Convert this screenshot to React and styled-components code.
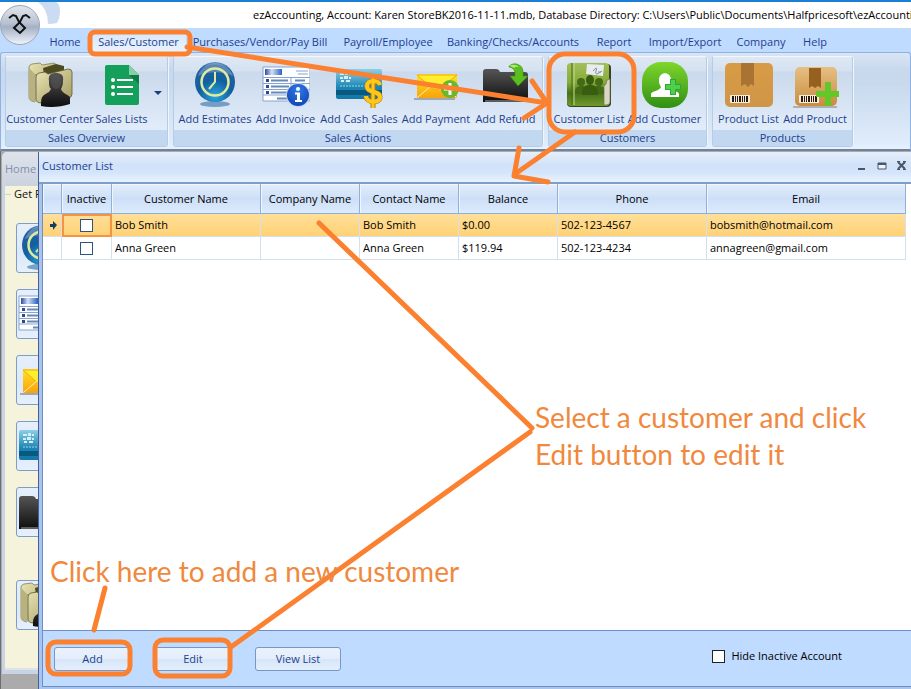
import React from 'react';
import styled, { createGlobalStyle } from 'styled-components';

const ink = '#1d3f8f';
const orange = '#fb8130';

const GlobalStyle = createGlobalStyle`
  * { box-sizing: border-box; }
  html, body { margin: 0; padding: 0; }
  body, button, input, table {
    font-family: "Open Sans", "Noto Sans", sans-serif;
    font-size: 11px;
  }
  svg { display: block; flex: none; }
`;

/* ---------- shell ---------- */

const Shell = styled.div`
  position: relative;
  display: flex;
  flex-direction: column;
  height: 100vh;
  overflow: hidden;
  background: #bfdbff;
`;

const TitleBar = styled.header`
  display: flex;
  align-items: center;
  height: 28px;
  flex: none;
  padding-left: 253px;
  border-top: 2px solid #1a7fd4;
  background: #fff;
  overflow: hidden;
`;

const Title = styled.h1`
  margin: 0;
  font-size: 11px;
  font-weight: 400;
  line-height: 16px;
  color: #000;
  white-space: nowrap;
`;

const AppButton = styled.button`
  position: absolute;
  left: 0;
  top: 0;
  width: 60px;
  height: 46px;
  padding: 0;
  border: 0;
  background: none;
`;

const TabBar = styled.nav`
  display: flex;
  flex: none;
  height: 24px;
  padding-left: 42px;
  background: #bfdbff;
`;

const Tab = styled.button`
  display: flex;
  align-items: center;
  justify-content: center;
  flex: none;
  width: ${(p) => p.$width}px;
  padding: 3px 3px 0;
  border: 0;
  line-height: 18px;
  white-space: nowrap;
  color: ${ink};
  background: ${(p) => (p.$active ? 'linear-gradient(#d5e6fb, #eaf3fd) content-box' : 'none')};
`;

/* ---------- ribbon ---------- */

const Ribbon = styled.div`
  display: flex;
  flex: none;
  gap: 5px;
  height: 99px;
  padding: 3px 5px 4px 4px;
  border: 1px solid #8db2e3;
  border-bottom: 2px solid #71839c;
  border-radius: 3px 3px 0 0;
  background: linear-gradient(#d9e5f4 0, #c9d9ed 16px, #c8d9ee 30px, #dfecfb 90px, #e7f2ff 100%);
`;

const Group = styled.section`
  display: flex;
  flex-direction: column;
  flex: none;
  height: 91px;
  border: 1px solid #b5cbe6;
  border-top-color: #f4f8fd;
  border-radius: 3px;
  box-shadow: 1px 0 0 #eef5fd;
  background: linear-gradient(#dfe8f4 0, #d5e1f1 14px, #cad9ec 15px, #e2edfa 74px);
`;

const GroupItems = styled.div`
  display: flex;
  flex: 1;
  padding: 0 3px;
`;

const GroupName = styled.h2`
  margin: 0;
  height: 16px;
  font-size: 11px;
  font-weight: 400;
  line-height: 15px;
  text-align: center;
  color: ${ink};
  background: #c1d8f0;
`;

const RibbonButton = styled.button`
  display: flex;
  flex-direction: column;
  align-items: center;
  flex: none;
  width: ${(p) => p.$width}px;
  padding: 4px 0 0;
  border: 0;
  background: none;
  color: ${ink};
`;

const RibbonLabel = styled.span`
  line-height: 20px;
  white-space: nowrap;
`;

const DropButton = styled.button`
  width: 12px;
  padding: 0 2px;
  border: 0;
  background: none;
`;

/* ---------- workspace ---------- */

const Workspace = styled.main`
  display: flex;
  flex: 1;
  min-height: 0;
  padding: 1px 0 0 1px;
  border-left: 1px solid #6a6d73;
  background: #ababab;
`;

const HomeWindow = styled.section`
  display: flex;
  flex-direction: column;
  width: 36px;
  flex: none;
  margin-bottom: 15px;
  overflow: hidden;
  border-radius: 5px 0 0 0;
  background: #c7d4e6;
`;

const HomeTitle = styled.h2`
  margin: 0;
  height: 34px;
  flex: none;
  padding: 8px 0 0 3px;
  font-size: 11px;
  font-weight: 400;
  line-height: 18px;
  color: #8090aa;
  background: linear-gradient(#dfe4eb, #cbd3df);
`;

const HomeBody = styled.div`
  flex: 1;
  min-height: 0;
  margin: 0 0 4px 3px;
  padding-top: 2px;
  overflow: hidden;
  background: #f5f3dc;
  border-bottom: 2px solid #dfe3e2;
`;

const HomeLegend = styled.p`
  display: flex;
  align-items: center;
  gap: 3px;
  margin: 0;
  line-height: 12px;
  white-space: nowrap;
  color: #111;
  &::before {
    content: '';
    flex: none;
    width: 6px;
    height: 1px;
    background: #d4d4c8;
  }
`;

const Shortcuts = styled.div`
  display: flex;
  flex-direction: column;
  gap: 16px;
  padding: 23px 0 0 11px;
`;

const Shortcut = styled.button`
  display: grid;
  place-items: center;
  width: 66px;
  height: 50px;
  flex: none;
  padding: 0 14px 0 0;
  border: 1px solid #7d9cc8;
  border-radius: 3px;
  background: linear-gradient(#e6effb, #dce9fa 60%, #e6f0fc);
  margin-top: ${(p) => (p.$last ? 27 : 0)}px;
`;

const ListWindow = styled.section`
  display: flex;
  flex-direction: column;
  flex: 1;
  min-width: 0;
  padding: 0 0 2px 3px;
  border-left: 1px solid #42619c;
  background: #a9c5ee;
`;

const WindowBar = styled.div`
  display: flex;
  align-items: center;
  justify-content: space-between;
  height: 32px;
  flex: none;
  margin-left: -3px;
  padding: 0 3px 2px;
  border-bottom: 2px solid #7f9fcb;
  background: linear-gradient(#e6effb, #d0e1f8 14px, #d3e4fb 20px, #e8f3ff);
`;

const WindowTitle = styled.h2`
  margin: 0;
  font-size: 11px;
  font-weight: 400;
  line-height: 18px;
  color: ${ink};
`;

const WindowTools = styled.div`
  display: flex;
  gap: 8px;
`;

const ToolButton = styled.button`
  padding: 0;
  border: 0;
  background: none;
`;

const GridArea = styled.div`
  flex: 1;
  min-height: 0;
  padding-right: 5px;
  border-left: 1px solid #6f8fbf;
  background: #fff;
`;

const DataTable = styled.table`
  width: 100%;
  table-layout: fixed;
  border-collapse: separate;
  border-spacing: 0;
  color: #000;
`;

const HeadCell = styled.th`
  height: 30px;
  padding: 0;
  font-weight: 400;
  white-space: nowrap;
  border-right: 1px solid #8fb0da;
  border-bottom: 1px solid #8fb0da;
  box-shadow: inset 1px 1px 0 #f0f6fe;
  background: linear-gradient(#e4eefb, #cddff7 50%, #dcecfe);
`;

const Row = styled.tr`
  background: ${(p) => (p.$selected ? 'linear-gradient(#ffdf98, #ffd174)' : '#fff')};
`;

const Cell = styled.td`
  height: 23px;
  padding: 0 3px;
  line-height: 16px;
  white-space: nowrap;
  border-right: 1px solid #d3e0f2;
  border-bottom: 1px solid #d3e0f2;
  ${(p) => p.$focus && `outline: 2px solid #f59342; outline-offset: -2px;`}
`;

const Tick = styled.input`
  appearance: none;
  display: block;
  flex: none;
  width: 13px;
  height: 13px;
  margin: ${(p) => (p.$centered ? '0 auto' : '0')};
  border: 1px solid ${(p) => (p.$centered ? '#2d5580' : '#222')};
  background: #fff;
`;

const Footer = styled.footer`
  display: flex;
  align-items: flex-start;
  gap: 24px;
  height: 57px;
  flex: none;
  padding: 16px 69px 0 11px;
  border: 1px solid #6f8fbf;
  border-right: 0;
  background: #bfdbff;
`;

const PushButton = styled.button`
  width: ${(p) => p.$width}px;
  height: 24px;
  padding: 0;
  border: 1px solid #7597c9;
  border-radius: 3px;
  line-height: 18px;
  color: ${ink};
  background: linear-gradient(#e9f1fc 0, #e4eefb 50%, #d6e5f8 52%, #e4effc);
`;

const HideLabel = styled.label`
  display: flex;
  align-items: center;
  gap: 6px;
  margin: 0 0 0 auto;
  line-height: 18px;
  color: #000;
`;

/* ---------- callouts ---------- */

const Callouts = styled.div`
  position: absolute;
  inset: 0;
  overflow: hidden;
  pointer-events: none;
`;

const Note = styled.p`
  position: absolute;
  left: ${(p) => p.$x}px;
  top: ${(p) => p.$y}px;
  margin: 0;
  font-family: Lato, "Open Sans", sans-serif;
  font-size: 28px;
  font-variant-ligatures: none;
  line-height: 37px;
  white-space: pre-line;
  color: #f0883e;
`;

/* ---------- icons ---------- */

const Defs = () => (
  <svg width="0" height="0" aria-hidden="true">
    <defs>
      <linearGradient id="khaki" x2="1" y2="1"><stop stopColor="#e8e4b4" /><stop offset="1" stopColor="#a39b60" /></linearGradient>
      <linearGradient id="black" x2="0" y2="1"><stop stopColor="#555" /><stop offset="1" stopColor="#0e0e0e" /></linearGradient>
      <radialGradient id="globe" cx=".5" cy=".85" r=".9"><stop stopColor="#2ba6dd" /><stop offset=".45" stopColor="#12609f" /><stop offset=".85" stopColor="#255f9f" /><stop offset="1" stopColor="#7bb4dd" /></radialGradient>
      <linearGradient id="card" x2="0" y2="1"><stop stopColor="#8cd0e6" /><stop offset=".6" stopColor="#1c86b4" /><stop offset="1" stopColor="#1376a6" /></linearGradient>
      <linearGradient id="gold" x2="0" y2="1"><stop stopColor="#ffe524" /><stop offset="1" stopColor="#f9a10c" /></linearGradient>
      <linearGradient id="leaf" x2="0" y2="1"><stop stopColor="#7fd62c" /><stop offset="1" stopColor="#2f8f14" /></linearGradient>
      <linearGradient id="book" x2="0" y2="1"><stop stopColor="#a3bf58" /><stop offset=".45" stopColor="#86ab3a" /><stop offset=".7" stopColor="#47701a" /><stop offset="1" stopColor="#6f9a2a" /></linearGradient>
      <linearGradient id="box" x2="0" y2="1"><stop stopColor="#d99c45" /><stop offset="1" stopColor="#cf9547" /></linearGradient>
      <linearGradient id="boxLight" x2="0" y2="1"><stop stopColor="#e6bf84" /><stop offset="1" stopColor="#c98c3e" /></linearGradient>
      <radialGradient id="info" cx=".5" cy=".3" r=".8"><stop stopColor="#2f7be8" /><stop offset="1" stopColor="#0b3fae" /></radialGradient>
      <linearGradient id="flag" x2="1"><stop stopColor="#2c4da0" /><stop offset=".4" stopColor="#d6e1f6" /><stop offset="1" stopColor="#2a62c0" /></linearGradient>
      <linearGradient id="orb" x2="0" y2="1"><stop stopColor="#e3e7ee" /><stop offset=".45" stopColor="#b9c2d2" /><stop offset=".55" stopColor="#a4b0c4" /><stop offset="1" stopColor="#f1f5fb" /></linearGradient>
    </defs>
  </svg>
);

const Icon = ({ children }) => (
  <svg width="48" height="48" viewBox="0 0 48 48" aria-hidden="true">{children}</svg>
);

const FoldersIcon = () => (
  <Icon>
    <path d="M3 6q0-2 3-3l8-1 2 2 12-2 3 2v4L9 14v27q-6-1-6-5z" fill="url(#khaki)" stroke="#77713f" strokeWidth=".7" />
    <path d="M17 7l13-4 8 2v6l-20 3z" fill="#4d4923" />
    <path d="M10 16q0-3 3-4l6-1 3 2 20-5q4 0 4 3v22q0 3-3 4l-27 5q-6 0-6-4z" fill="url(#khaki)" stroke="#5d582f" strokeWidth=".8" />
    <path d="M3 7l6 6v28q-6-1-6-5z" fill="#b9b27a" />
    <path d="M23 20c-1-6 2-8 7-8s8 2 7 8c0 4-1 6-2 8 1 4 6 5 9 8v7c-9 3-20 4-29 2 0-8 0-10 8-14l2-3c-2-2-2-4-2-8z" fill="url(#black)" />
    <path d="M25 20c0-4 2-6 5-6s5 3 5 7-2 7-5 7-5-4-5-8z" fill="#555" opacity=".5" />
  </Icon>
);

const SheetIcon = () => (
  <Icon>
    <path d="M9 4h22l10 10v28a2 2 0 0 1-2 2H9a2 2 0 0 1-2-2V6a2 2 0 0 1 2-2z" fill="#14a05a" />
    <path d="M31 4l10 10H31z" fill="#86cfa8" />
    <path d="M31 14h10v9z" fill="#0d7a44" />
    <g fill="#fff">
      <circle cx="15" cy="19" r="2" /><circle cx="15" cy="26" r="2" /><circle cx="15" cy="33" r="2" />
      <path d="M19 18h16v2H19zM19 25h16v2H19zM19 32h16v2H19z" />
    </g>
  </Icon>
);

const ClockIcon = () => (
  <Icon>
    <ellipse cx="24" cy="43" rx="15" ry="3" fill="#4d7fae" opacity=".7" />
    <circle cx="24" cy="21" r="20" fill="url(#globe)" />
    <path d="M7 15C10 6 17 2 24 2S39 6 42 15c-10-5-25-5-35 0z" fill="#fff" opacity=".25" />
    <circle cx="24" cy="21" r="13.500" fill="none" stroke="#dfeb9e" strokeWidth="2.500" />
    <path d="M24 11v10l-6 7" fill="none" stroke="#dfeb9e" strokeWidth="2" />
  </Icon>
);

const FormArt = () => (
  <>
    <path d="M1 6h47v34H1z" fill="#fdfeff" stroke="#8ba3cc" />
    <path d="M3 8h17v6H3z" fill="url(#flag)" />
    <path d="M34 10h12M36 13h10M1 16.500h47M1 22.500h47M1 28.500h47M29 16v17M1 34h47" stroke="#8ba3cc" fill="none" />
    <path d="M4 18h3v3H4zM4 24h3v3H4zM4 30h3v3H4z" fill="#30488e" />
    <path d="M9 19.500h17M9 25.500h18M9 31.500h17M33 19.500h10M15 37.500h12" stroke="#6689b8" strokeWidth="2" />
  </>
);

const InvoiceIcon = () => (
  <Icon>
    <FormArt />
    <circle cx="36" cy="34" r="12" fill="#c5d3e8" />
    <circle cx="36" cy="34" r="11" fill="url(#info)" />
    <circle cx="36" cy="28" r="2" fill="#fff" />
    <path d="M33 31.500h5v7.500h2v2h-7v-2h2v-5.500h-2z" fill="#fff" />
  </Icon>
);

const FormIcon = () => <Icon><FormArt /></Icon>;

const CardArt = () => (
  <>
    <rect x="1" y="8" width="46" height="30" rx="2" fill="url(#card)" />
    <path d="M1 29h46v5H1z" fill="#08587f" />
    <path d="M5 12h4v2H5zM10 11h3v3h-3zM14 12h2v2h-2zM5 16h3v2H5zM9 15h4v3H9zM14 16h2v2h-2zM6 19h3v2H6zM11 19h4v2h-4z" fill="#d7eef6" />
    <path d="M5 25h26" stroke="#a5d3e5" strokeDasharray="2 1" />
  </>
);

const CardIcon = () => <Icon><CardArt /></Icon>;

const CashIcon = () => (
  <Icon>
    <CardArt />
    <path d="M45 24c-1-5-13-6-13 1 0 8 13 4 13 11 0 7-14 6-14-1" fill="none" stroke="#b7741a" strokeWidth="5" />
    <path d="M38 16v31" stroke="#b7741a" strokeWidth="5" />
    <path d="M38 16v31" stroke="#ffc814" strokeWidth="3" />
    <path d="M45 24c-1-5-13-6-13 1 0 8 13 4 13 11 0 7-14 6-14-1" fill="none" stroke="#ffc814" strokeWidth="4" />
  </Icon>
);

const MailArt = () => (
  <>
    <path d="M2 38h41" stroke="#9fa9b5" strokeWidth="2" />
    <rect x="5" y="13" width="40" height="24" rx="2" fill="url(#gold)" />
    <path d="M5 14l16 14h6L45 14z" fill="#ffee2d" stroke="#f0aa11" />
    <path d="M6 36l13-11M44 36L30 25" stroke="#fff3a6" fill="none" />
  </>
);

const MailIcon = () => <Icon><MailArt /></Icon>;

const PaymentIcon = () => (
  <Icon>
    <MailArt />
    <circle cx="38" cy="28" r="9" fill="#67b82c" />
    <path d="M38 22v12M32 28h12" stroke="#fff" strokeWidth="3" />
  </Icon>
);

const BlackFolderArt = () => (
  <>
    <path d="M1 41V11q0-3 3-3h10q3 0 4 3h25q3 0 3 3v27z" fill="url(#black)" />
    <path d="M3 40h41" stroke="#aaa" />
  </>
);

const BlackFolderIcon = () => <Icon><BlackFolderArt /></Icon>;

const RefundIcon = () => (
  <Icon>
    <BlackFolderArt />
    <path d="M27 5q5-4 10-1 5 2 4 11h5l-10 10-8-10h5q1-8-6-9z" fill="#5cbd1f" stroke="#3c8f11" strokeWidth=".6" />
    <path d="M27 5q6-3 10 1-4-1-5 1-3-2-5-2z" fill="#b0e879" />
  </Icon>
);

const BookIcon = () => (
  <Icon>
    <rect x="2" y="3" width="44" height="43" rx="4" fill="#38421f" />
    <path d="M6 2h34q4 0 4 3v38q0 2-3 2H6q-4 0-4-4V6q0-4 4-4z" fill="url(#book)" />
    <path d="M45 18l-3 1-1 4-2 2v19h2q4 0 4-3z" fill="#d9d6c4" stroke="#6d7451" strokeWidth=".7" />
    <path d="M7 2v42" stroke="#436c17" />
    <path d="M9 2v42" stroke="#c5d98a" />
    <path d="M22 3l17 1-1 11-17-2z" fill="#e8ecef" />
    <path d="M28 10q5-6 3 0t6 0M33 11h3" fill="none" stroke="#8390ac" />
    <g fill="#446a17">
      <circle cx="16" cy="21" r="4" /><circle cx="34" cy="21" r="4" />
      <path d="M10 33c0-6 1-7 5-8h4l3 8zM28 33l3-8h4c4 1 4 2 4 8z" />
    </g>
    <g fill="#385c10">
      <ellipse cx="25" cy="19" rx="4" ry="5" />
      <path d="M17 34c0-6 1-9 6-10h4c5 1 6 4 6 10z" />
    </g>
  </Icon>
);

const AddCustomerIcon = () => (
  <Icon>
    <rect x="1" y="1" width="46" height="46" rx="19" fill="url(#leaf)" />
    <path d="M18 19c0-9 12-9 12 0 0 4-1 5-2 7 1 4 10 4 10 7v3H10v-3c0-3 9-3 10-7-1-2-2-3-2-7z" fill="#fff" />
    <path d="M32 18v16M24 26h16" stroke="#2fa53a" strokeWidth="6" strokeLinejoin="round" />
    <path d="M32 19v14M25 26h14" stroke="#4fd04a" strokeWidth="4" />
  </Icon>
);

const Barcode = ({ x, y }) => (
  <g>
    <rect x={x} y={y} width="20" height="8" rx="1" fill="#f5ecde" />
    {[2, 5, 7, 9, 12, 14, 16].map((n, i) => (
      <rect key={n} x={x + n} y={y + 1} width={i % 3 === 0 ? 2 : 1} height="6" fill="#2a1a10" />
    ))}
  </g>
);

const BoxIcon = () => (
  <Icon>
    <rect x="0" y="2" width="48" height="44" rx="5" fill="url(#box)" />
    <path d="M16 2h13v23l-3-2-3 3-3-3-4 2z" fill="#a97433" />
    <Barcode x={5} y={34} />
  </Icon>
);

const AddBoxIcon = () => (
  <Icon>
    <path d="M2 46h44" stroke="#aeb0b0" strokeWidth="2" />
    <rect x="4" y="6" width="42" height="39" rx="5" fill="url(#boxLight)" />
    <path d="M18 7h12v20l-3-2-3 2-3-2-3 2z" fill="#96601f" />
    <Barcode x={8} y={34} />
    <path d="M37 21v24M25 33h23" stroke="#62c829" strokeWidth="6" />
  </Icon>
);

const Orb = () => (
  <svg width="60" height="46" viewBox="0 0 60 46" aria-hidden="true">
    <path d="M38 2h18q4 2 4 9t-3 12q-4 1-9 1Q48 9 38 2z" fill="#cbdcf2" />
    <circle cx="20" cy="25" r="19.500" fill="url(#orb)" stroke="#9ba8bb" />
    <path d="M9 18l4-3 3 1 3 6 6 6-5 5-6-5 6-6 3-6 3-1 4 3" fill="none" stroke="#111" strokeWidth="2" />
  </svg>
);

/* ---------- data ---------- */

const tabs = [
  ['Home', 46], ['Sales/Customer', 101], ['Purchases/Vendor/Pay Bill', 142], ['Payroll/Employee', 114],
  ['Banking/Checks/Accounts', 136], ['Report', 66], ['Import/Export', 76], ['Company', 76], ['Help', 32],
];

const groups = [
  { name: 'Sales Overview', drop: true, items: [['Customer Center', 82, FoldersIcon], ['Sales Lists', 61, SheetIcon]] },
  {
    name: 'Sales Actions',
    items: [
      ['Add Estimates', 76, ClockIcon], ['Add Invoice', 65, InvoiceIcon], ['Add Cash Sales', 82, CashIcon],
      ['Add Payment', 72, PaymentIcon], ['Add Refund', 67, RefundIcon],
    ],
  },
  { name: 'Customers', items: [['Customer List', 74, BookIcon], ['Add Customer', 77, AddCustomerIcon]] },
  { name: 'Products', items: [['Product List', 65, BoxIcon], ['Add Product', 68, AddBoxIcon]] },
];

const shortcuts = [
  ['Estimates', ClockIcon], ['Invoice', FormIcon], ['Payment', MailIcon],
  ['Cash sales', CardIcon], ['Refund', BlackFolderIcon], ['Customer center', FoldersIcon],
];

const columns = [
  ['', 19], ['Inactive', 50], ['Customer Name', 149], ['Company Name', 99], ['Contact Name', 99],
  ['Balance', 99], ['Phone', 149], ['Email', null],
];

const customers = [
  { name: 'Bob Smith', balance: '$0.00', phone: '502-123-4567', email: 'bobsmith@hotmail.com' },
  { name: 'Anna Green', balance: '$119.94', phone: '502-123-4234', email: 'annagreen@gmail.com' },
];

/* ---------- app ---------- */

const CustomerTable = () => (
  <DataTable>
    <colgroup>
      {columns.map(([label, width]) => <col key={label} width={width ?? undefined} />)}
    </colgroup>
    <thead>
      <tr>{columns.map(([label]) => <HeadCell key={label} scope="col">{label}</HeadCell>)}</tr>
    </thead>
    <tbody>
      {customers.map((c, i) => (
        <Row key={c.name} $selected={i === 0}>
          <Cell>
            {i === 0 && (
              <svg width="12" height="9" viewBox="0 0 12 9" aria-hidden="true">
                <path d="M7 0l4 4-4 5V6H4V3h3z" fill="#173a68" />
              </svg>
            )}
          </Cell>
          <Cell $focus={i === 0}><Tick $centered type="checkbox" aria-label={`${c.name} inactive`} /></Cell>
          <Cell>{c.name}</Cell>
          <Cell />
          <Cell>{c.name}</Cell>
          <Cell>{c.balance}</Cell>
          <Cell>{c.phone}</Cell>
          <Cell>{c.email}</Cell>
        </Row>
      ))}
    </tbody>
  </DataTable>
);

export default function App() {
  return (
    <Shell>
      <GlobalStyle />
      <TitleBar>
        <Title>{'ezAccounting, Account: Karen StoreBK2016-11-11.mdb, Database Directory: C:\\Users\\Public\\Documents\\Halfpricesoft\\ezAccounting'}</Title>
      </TitleBar>
      <TabBar>
        {tabs.map(([label, width]) => (
          <Tab key={label} $width={width} $active={label === 'Sales/Customer'}>{label}</Tab>
        ))}
      </TabBar>
      <AppButton aria-label="Application menu"><Orb /></AppButton>

      <Ribbon>
        {groups.map((group) => (
          <Group key={group.name}>
            <GroupItems>
              {group.items.map(([label, width, Art]) => (
                <RibbonButton key={label} $width={width}>
                  <Art />
                  <RibbonLabel>{label}</RibbonLabel>
                </RibbonButton>
              ))}
              {group.drop && (
                <DropButton aria-label="More sales lists">
                  <svg width="8" height="5" viewBox="0 0 8 5"><path d="M0 0h8L4 4z" fill="#173f86" /></svg>
                </DropButton>
              )}
            </GroupItems>
            <GroupName>{group.name}</GroupName>
          </Group>
        ))}
      </Ribbon>

      <Workspace>
        <HomeWindow>
          <HomeTitle>Home</HomeTitle>
          <HomeBody>
            <HomeLegend>Get P</HomeLegend>
            <Shortcuts>
              {shortcuts.map(([label, Art], i) => (
                <Shortcut key={label} aria-label={label} $last={i === shortcuts.length - 1}><Art /></Shortcut>
              ))}
            </Shortcuts>
          </HomeBody>
        </HomeWindow>

        <ListWindow>
          <WindowBar>
            <WindowTitle>Customer List</WindowTitle>
            <WindowTools>
              <ToolButton aria-label="Minimize">
                <svg width="12" height="12" viewBox="0 0 12 12"><path d="M2 8h7v2H2z" fill="#4a5566" /></svg>
              </ToolButton>
              <ToolButton aria-label="Maximize">
                <svg width="12" height="12" viewBox="0 0 12 12"><path d="M2 3h8v6H2z" fill="#eef4fc" stroke="#4a5566" /><path d="M2 3h8v2H2z" fill="#4a5566" /></svg>
              </ToolButton>
              <ToolButton aria-label="Close">
                <svg width="12" height="12" viewBox="0 0 12 12"><path d="M2 2l7 7M9 2l-7 7" stroke="#4a5566" strokeWidth="2" /><path d="M1 1.500h3M7 1.500h3M1 9.500h3M7 9.500h3" stroke="#4a5566" /></svg>
              </ToolButton>
            </WindowTools>
          </WindowBar>
          <GridArea><CustomerTable /></GridArea>
          <Footer>
            <PushButton $width={77}>Add</PushButton>
            <PushButton $width={76}>Edit</PushButton>
            <PushButton $width={86}>View List</PushButton>
            <HideLabel><Tick type="checkbox" />Hide Inactive Account</HideLabel>
          </Footer>
        </ListWindow>
      </Workspace>

      <Defs />
      <Callouts>
        <svg width="911" height="689" viewBox="0 0 911 689" fill="none" stroke={orange} strokeWidth="5" strokeLinecap="round" strokeLinejoin="round" aria-hidden="true">
          <rect x="90" y="32" width="100" height="22" rx="5" />
          <path d="M187 47L547 103M532 81l15 22-23 15" />
          <rect x="549" y="54" width="85" height="78" rx="16" />
          <path d="M575 132L515 174M519 148l-5 28 34 6" />
          <path d="M319 223L532 428M530 432L231 647M105 588L94 630" />
          <rect x="48" y="642" width="82" height="32" rx="8" />
          <rect x="155" y="640" width="75" height="36" rx="8" />
        </svg>
        <Note $x={50} $y={553}>Click here to add a new customer</Note>
        <Note $x={535} $y={399}>{'Select a customer and click\nEdit button to edit it'}</Note>
      </Callouts>
    </Shell>
  );
}
